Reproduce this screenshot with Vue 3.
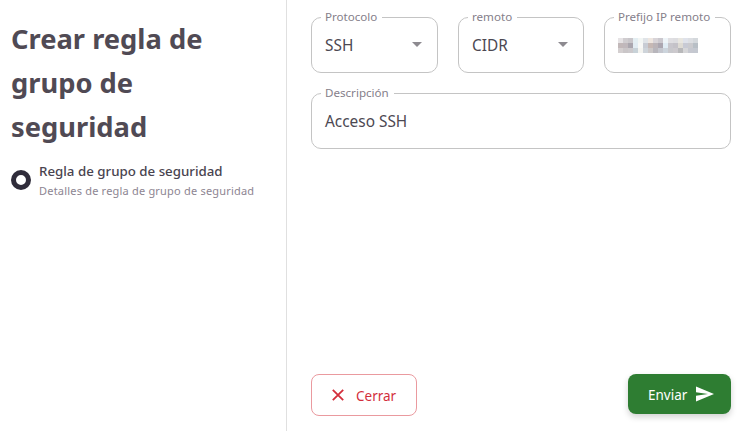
<script setup>
const mosaic = [
  '#e6e3e5','#d0cdd0','#c9c6ca','#e4eef2','#f3f6f4','#e0e4e8','#eee6e0','#d8d4d8','#cbc8ce','#eef4f8','#e0dfe2','#dddde0','#e8e6e0','#dfe2ea','#dcdee2','#d4d8dc',
  '#c2b8b9','#c0b8bc','#aaa6ae','#e2ecf2','#f8f8f6','#c8ccd4','#c6b8b4','#bbb4b8','#aba6b0','#e0ecf4','#c8c6cc','#c4c2c8','#dedbd4','#c8cad4','#cacace','#b8bfc6',
  '#d4cfd0','#cac6c8','#ccc9cc','#c8d2d8','#f4f4f0','#ced4da','#ccc8c8','#b8b6bc','#c4c6ce','#ccd4dc','#c8c8cc','#ccc9cd','#b8b8ba','#d6d6d8','#c6c8d0','#c4c8d0'
]
</script>

<template>
  <main class="page">
    <aside class="side">
      <h1 class="title">Crear regla de grupo de seguridad</h1>
      <div class="step">
        <span class="dot"></span>
        <div class="step-text">
          <div class="step-name">Regla de grupo de seguridad</div>
          <div class="step-desc">Detalles de regla de grupo de seguridad</div>
        </div>
      </div>
    </aside>

    <section class="content">
      <div class="fields">
        <div class="row">
          <fieldset class="field field-a">
            <legend>Protocolo</legend>
            <div class="value"><span>SSH</span><i class="caret"></i></div>
          </fieldset>
          <fieldset class="field field-b">
            <legend>remoto</legend>
            <div class="value"><span>CIDR</span><i class="caret"></i></div>
          </fieldset>
          <fieldset class="field field-c">
            <legend>Prefijo IP remoto</legend>
            <div class="mosaic">
              <span v-for="(c, i) in mosaic" :key="i" :style="{ background: c }"></span>
            </div>
          </fieldset>
        </div>
        <fieldset class="field">
          <legend>Descripción</legend>
          <div class="value"><span>Acceso SSH</span></div>
        </fieldset>
      </div>

      <div class="actions">
        <button class="btn btn-close" type="button">
          <svg width="12" height="12" viewBox="0 0 12 12" aria-hidden="true">
            <path d="M0.8 0.8 11.2 11.2M11.2 0.8 0.8 11.2" stroke="#d32f3c" stroke-width="1.8" fill="none" />
          </svg>
          <span>Cerrar</span>
        </button>
        <button class="btn btn-send" type="button">
          <span>Enviar</span>
          <svg width="18" height="16" viewBox="0 0 18 16" aria-hidden="true">
            <path d="M0 0.5 18 8 0 15.5V9.7L12 8 0 6.3Z" fill="#fff" />
          </svg>
        </button>
      </div>
    </section>
  </main>
</template>

<style>
html, body { margin: 0; background: #fff; }
</style>

<style scoped>
.page {
  display: flex;
  width: 741px;
  height: 431px;
  overflow: hidden;
  font-family: "Noto Sans", "Open Sans", sans-serif;
  color: #514b55;
  background: #fff;
}
.side {
  box-sizing: border-box;
  width: 287px;
  flex: none;
  padding: 17px 11px 0;
  border-right: 1px solid #e0e0e0;
}
.title {
  margin: 0;
  font-size: 27.3px;
  line-height: 44px;
  font-weight: 700;
  color: #504a54;
}
.step {
  display: flex;
  align-items: center;
  gap: 8px;
  margin-top: 13px;
}
.dot {
  box-sizing: border-box;
  width: 20px;
  height: 20px;
  flex: none;
  border: 5px solid #2f2c3a;
  border-radius: 50%;
}
.step-name {
  font-size: 13.3px;
  line-height: 18px;
  font-weight: 500;
  color: #49444f;
}
.step-desc {
  margin-top: 3px;
  font-size: 11px;
  line-height: 15px;
  letter-spacing: 0.2px;
  color: #8d8592;
}
.content {
  flex: 1;
  display: flex;
  flex-direction: column;
  justify-content: space-between;
  box-sizing: border-box;
  padding: 11px 10px 15px 24px;
}
.fields {
  display: flex;
  flex-direction: column;
  gap: 14px;
}
.row {
  display: flex;
  justify-content: space-between;
}
.field-a, .field-b, .field-c { width: 127px; }
.field-b { width: 126px; }
.field {
  box-sizing: border-box;
  height: 62px;
  margin: 0;
  padding: 0 13px;
  min-width: 0;
  border: 1px solid #c4c4c4;
  border-radius: 10px;
}
.field legend {
  padding: 0 5px 0 4px;
  margin-left: -4px;
  font-size: 11.6px;
  line-height: 12px;
  height: 12px;
  color: #85808a;
}
.value {
  display: flex;
  align-items: center;
  justify-content: space-between;
  height: 44px;
  padding-right: 2px;
  font-size: 15.4px;
  color: #4c4852;
}
.caret {
  width: 0;
  height: 0;
  margin-top: -1px;
  border-left: 5.5px solid transparent;
  border-right: 5.5px solid transparent;
  border-top: 5px solid #8d8a90;
}
.mosaic {
  display: grid;
  grid-template-columns: repeat(16, 5px);
  grid-auto-rows: 5px;
  margin-top: 15px;
}
.actions {
  display: flex;
  justify-content: space-between;
  align-items: flex-start;
}
.btn {
  box-sizing: border-box;
  display: flex;
  align-items: center;
  border-radius: 8px;
  font-family: inherit;
  font-size: 13.5px;
}
.btn-close {
  width: 106px;
  height: 42px;
  gap: 12px;
  padding: 2px 0 0 20px;
  border: 1px solid #ea9a9f;
  background: #fff;
  color: #d32f3c;
}
.btn-close svg { margin-top: -2px; }
.btn-send {
  width: 103px;
  height: 40px;
  gap: 9px;
  padding: 1px 0 0 20px;
  border: none;
  background: #2e7d32;
  color: #fff;
  box-shadow: 0 3px 6px rgba(0, 0, 0, 0.18);
}
.btn-send svg { margin-top: -2px; }
</style>
